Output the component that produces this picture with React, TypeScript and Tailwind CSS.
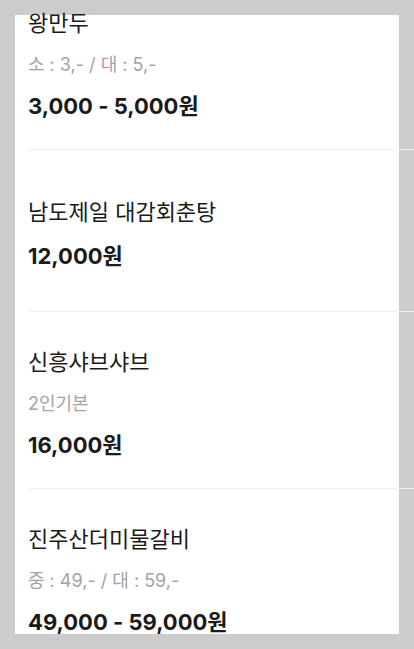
type MenuItem = {
  name: string;
  note?: string;
  price: string;
};

const items: MenuItem[] = [
  { name: "왕만두", note: "소 : 3,- / 대 : 5,-", price: "3,000 - 5,000원" },
  { name: "남도제일 대감회춘탕", price: "12,000원" },
  { name: "신흥샤브샤브", note: "2인기본", price: "16,000원" },
  { name: "진주산더미물갈비", note: "중 : 49,- / 대 : 59,-", price: "49,000 - 59,000원" },
];

const MenuRow = ({ name, note, price }: MenuItem) => {
  return (
    <li className="flex min-h-[162px] flex-col justify-center border-b border-[#f0f0f0] pt-[36px] pb-[28px]">
      <p className="text-[22px] leading-[28px] text-[#1a1a1a]">{name}</p>
      {note && (
        <p className="mt-4 text-[18px] leading-[24px] text-[#a3a3a3]">{note}</p>
      )}
      <p
        className={
          note
            ? "mt-[14px] text-[22px] leading-[30px] font-bold text-[#1a1a1a]"
            : "mt-[15px] text-[22px] leading-[30px] font-bold text-[#1a1a1a]"
        }
      >
        {price}
      </p>
    </li>
  );
};

export default function App() {
  return (
    <div
      className="h-[649px] w-[414px] overflow-hidden bg-[#cccccc] p-[15px]"
      style={{ fontFamily: "Inter, 'Noto Sans CJK KR', sans-serif" }}
    >
      <div className="flex h-[619px] w-[384px] flex-col bg-white pl-[13px]">
        <ul className="-mt-[42px] w-[386px]">
          {items.map((item) => (
            <MenuRow key={item.name} {...item} />
          ))}
        </ul>
      </div>
    </div>
  );
}
